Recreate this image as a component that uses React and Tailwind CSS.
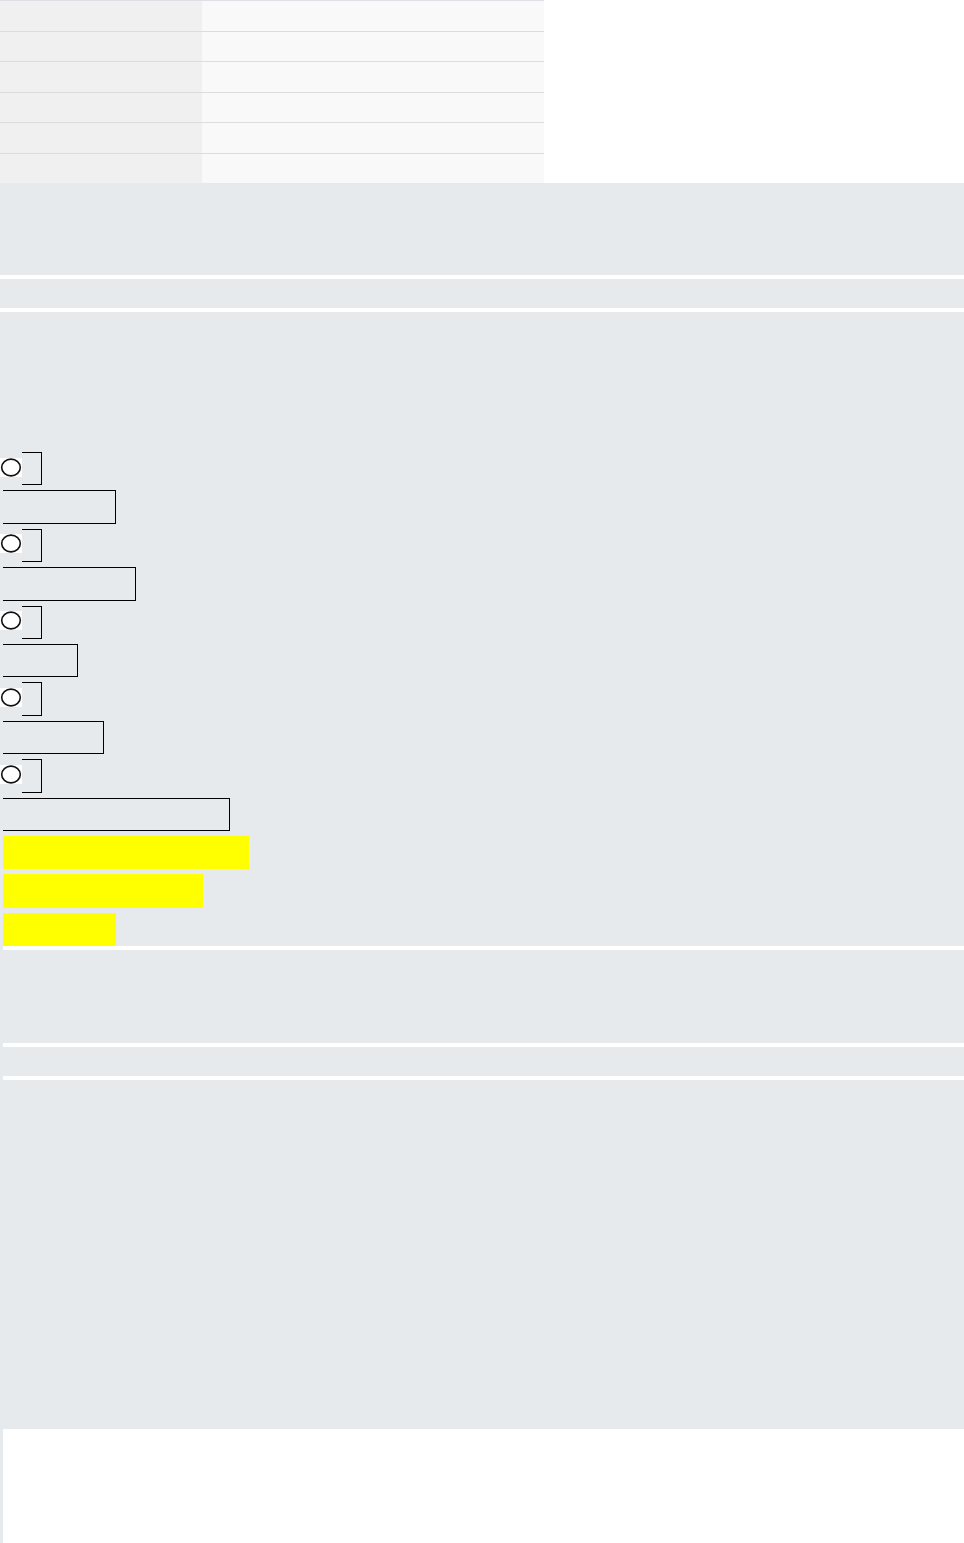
import React from "react";

const rows = [30, 30, 31, 30, 31, 30];
const boxWidths = [113, 133, 75, 101, 227];
const yellowWidths = [246, 200, 113];

function Radio() {
  return (
    <div className="flex h-[33.4px] items-start">
      <div className="mt-[5.7px] flex h-[19px] w-[22px] items-center justify-center bg-white">
        <svg width="22" height="19" viewBox="0 0 22 19">
          <ellipse cx="11" cy="9.5" rx="9.3" ry="8.4" fill="none" stroke="#111" strokeWidth="1.6" />
        </svg>
      </div>
      <div className="h-full w-[20px] border-y border-r border-black" />
    </div>
  );
}

function Box({ w }) {
  return <div className="ml-[3px] h-[33.4px] border-y border-r border-black" style={{ width: w }} />;
}

export default function App() {
  const items = [];
  boxWidths.forEach((w, i) => {
    items.push(<Radio key={"r" + i} />);
    items.push(<Box key={"b" + i} w={w} />);
  });
  return (
    <div className="w-[964px] bg-white font-['Liberation_Sans',sans-serif]">
      <div className="w-[544px] border-t border-[#dde1e6]">
        {rows.map((h, i) => (
          <div
            key={i}
            className={"grid grid-cols-[202px_342px] " + (i > 0 ? "border-t border-[#dcdcdc]" : "")}
            style={{ height: h }}
          >
            <div className="bg-[#f0f0f0]" />
            <div className="bg-[#f9f9f9]" />
          </div>
        ))}
      </div>
      <div className="h-[92px] bg-[#e7eaed]" />
      <div className="mt-[4px] h-[29px] bg-[#e7eaed]" />
      <div className="mt-[4px] bg-[#e7eaed] pt-[140px]">
        <div className="flex flex-col gap-[5px]">
          {items}
          {yellowWidths.map((w, i) => (
            <div key={"y" + i} className="ml-[3px] h-[33.4px] bg-[#ffff00]" style={{ width: w }} />
          ))}
        </div>
      </div>
      <div className="bg-[#e7eaed] pl-[3px]">
        <div className="h-[4px] bg-white" />
        <div className="h-[92.5px] bg-[#e7eaed]" />
        <div className="h-[4px] bg-white" />
        <div className="h-[29px] bg-[#e7eaed]" />
        <div className="h-[4px] bg-white" />
        <div className="h-[349px] bg-[#e7eaed]" />
        <div className="h-[114px] bg-white" />
      </div>
    </div>
  );
}
